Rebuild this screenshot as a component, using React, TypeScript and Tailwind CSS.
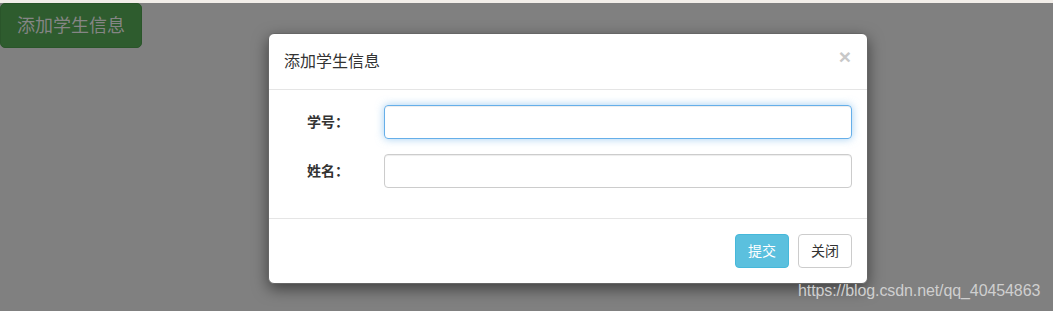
import React from 'react';

export default function App() {
    return (
        <div className="relative w-[1053px] h-[311px] overflow-hidden bg-[#808080]" style={{ fontFamily: '"Liberation Sans", "Noto Sans CJK SC", sans-serif' }}>
            {/* Strip of page above the backdrop */}
            <div className="h-[3px] bg-[#f2eee9]" />

            {/* Page button, dimmed by the backdrop */}
            <button className="h-[45px] px-[16px] rounded-[5px] bg-[#2e5c2e] border border-[#2a552a] text-[18px] leading-[24px] text-[#858585]">
                添加学生信息
            </button>

            {/* Modal dialog */}
            <div className="absolute left-[268px] top-[33px] w-[600px] bg-white border border-[#666] rounded-[6px] shadow-[0_5px_15px_rgba(0,0,0,0.5)] text-[#333]">
                {/* Header */}
                <div className="flex items-center justify-between h-[56px] px-[15px] border-b border-[#e5e5e5]">
                    <h4 className="text-[16px] leading-[24px] mt-[1px]">添加学生信息</h4>
                    <span className="text-[21px] leading-none font-bold text-[#c8c8c8] -mt-[10px] mr-[1px]">×</span>
                </div>

                {/* Body */}
                <div className="flex flex-col gap-[15px] pt-[15px] pb-[30px] pl-[38px] pr-[15px] border-b border-[#e5e5e5]">
                    <div className="flex items-center">
                        <label className="w-[77px] text-[14px] font-bold">学号：</label>
                        <input className="flex-1 h-[34px] rounded-[4px] border border-[#66afe9] shadow-[inset_0_1px_1px_rgba(0,0,0,0.075),0_0_8px_rgba(102,175,233,0.6)] outline-none" />
                    </div>
                    <div className="flex items-center">
                        <label className="w-[77px] text-[14px] font-bold">姓名：</label>
                        <input className="flex-1 h-[34px] rounded-[4px] border border-[#ccc] shadow-[inset_0_1px_1px_rgba(0,0,0,0.075)] outline-none" />
                    </div>
                </div>

                {/* Footer */}
                <div className="flex justify-end gap-[9px] p-[15px]">
                    <button className="h-[34px] w-[54px] rounded-[4px] bg-[#5bc0de] border border-[#46b8da] text-white text-[14px]">提交</button>
                    <button className="h-[34px] w-[54px] rounded-[4px] bg-white border border-[#ccc] text-[#333] text-[14px]">关闭</button>
                </div>
            </div>

            {/* Watermark */}
            <div className="absolute left-[798px] top-[281px] text-[16px] leading-[20px] tracking-[-0.1px] text-[#cfcfcf]">
                https://blog.csdn.net/qq_40454863
            </div>
        </div>
    );
}
